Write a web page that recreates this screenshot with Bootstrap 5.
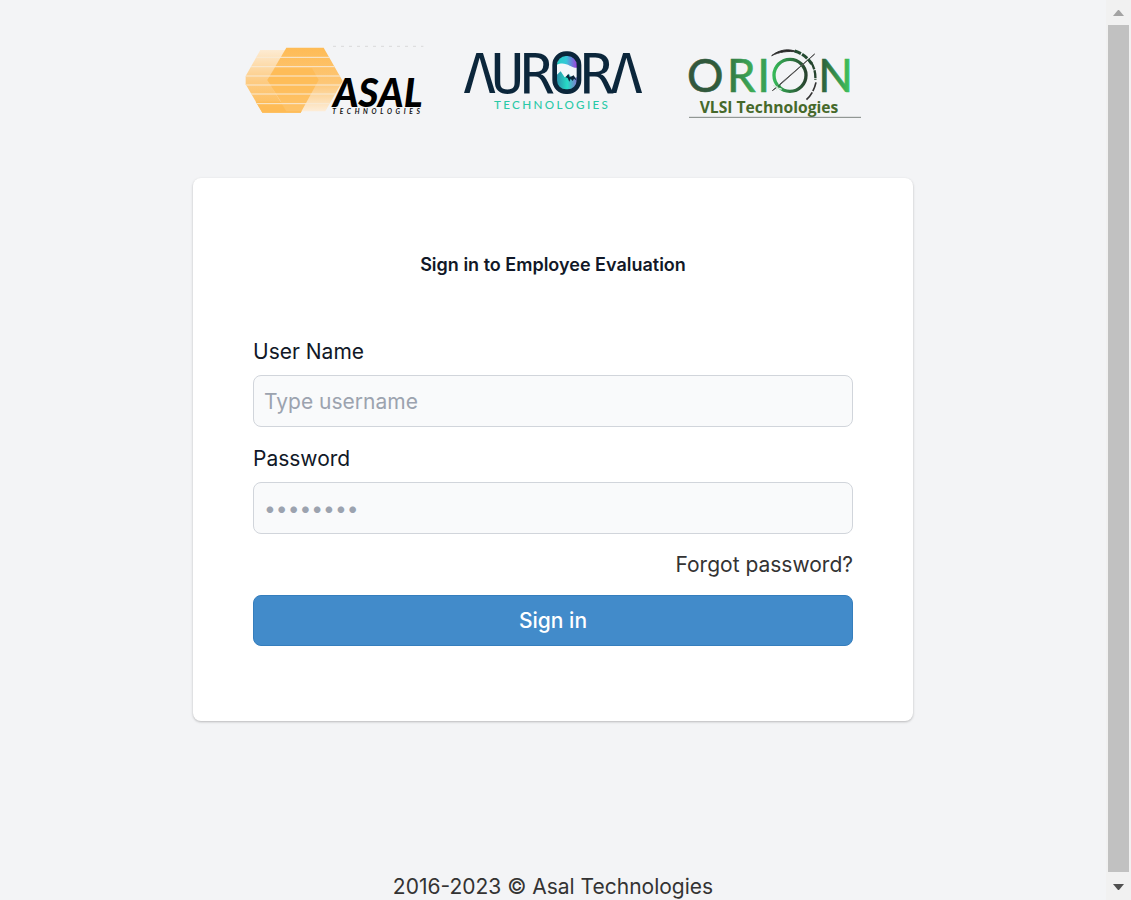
<!DOCTYPE html>
<html lang="en">
<head>
<meta charset="utf-8">
<meta name="viewport" content="width=device-width, initial-scale=1">
<title>Sign in to Employee Evaluation</title>
<link rel="stylesheet" href="https://cdn.jsdelivr.net/npm/bootstrap@5.3.0/dist/css/bootstrap.min.css">
<style>
  body { background: #f3f4f6; color: #333; font-family: Inter, "Noto Sans", sans-serif; font-size: 21px; line-height: 30px; }
  .page-main { padding-top: 36px; }
  .logo-row { gap: 8px; margin-bottom: 52px; }
  .logo-row svg { width: 200px; height: 90px; }
  .login-card { width: 100%; max-width: 720px; border: 0; border-radius: 8px; padding: 72px 60px 75px; box-shadow: 0 1px 3px rgba(0,0,0,.15), 0 1px 2px rgba(0,0,0,.1); }
  .login-title { color: #111827; font-size: 18px; font-weight: 600; line-height: 30px; margin-bottom: 57px; }
  .form-label { color: #111827; margin-bottom: 8px; }
  .form-control { height: 52px; padding: 10px; font-size: 21px; background: #f9fafb; border-color: #d1d5db; border-radius: 8px; }
  .form-control::placeholder { color: #9ca3af; }
  .field { margin-bottom: 17px; }
  .forgot { color: #333; line-height: 28px; margin-bottom: 16px; }
  .btn-signin { height: 51px; padding: 0; font-size: 21px; font-weight: 500; color: #fff; background: #428bca; border-color: #357ebd; border-radius: 8px; }
  .page-footer { line-height: 26px; }
  .scroll-track { width: 25px; background: #f1f1f1; position: sticky; top: 0; }
  .scroll-track svg { width: 25px; height: 25px; }
  .scroll-thumb { background: #c1c1c1; margin: 0 2px 3px; }
</style>
</head>
<body class="d-flex align-items-start">
<div class="d-flex flex-column flex-grow-1 min-vh-100">
  <main class="page-main d-flex flex-column align-items-center flex-grow-1">
    <div class="logo-row d-flex justify-content-center">
      <svg viewBox="27 0 600 270" role="img" aria-label="Asal Technologies">
        <defs>
          <linearGradient id="fadeTop" x2="0" y2="1"><stop stop-color="#fdebd2"/><stop offset=".5" stop-color="#fdcb82"/><stop offset="1" stop-color="#febb55"/></linearGradient>
          <linearGradient id="fadeLow" x2="0" y2="1"><stop stop-color="#febb55"/><stop offset=".55" stop-color="#fdc675"/><stop offset="1" stop-color="#fdedd8"/></linearGradient>
          <clipPath id="hexes"><path d="M73 42H188L248 132 194 230H79L29 145V120Z"/><path d="M151 35H263L320 135 268 226H151L94 132Z"/></clipPath>
        </defs>
        <path d="M73 42H188L248 132 194 230H79L29 145V120Z" fill="url(#fadeTop)"/>
        <path d="M151 35H263L320 135 268 226H151L94 132Z" fill="url(#fadeLow)"/>
        <path d="M117 97H228L248 132 194 230H79L59 197H135L94 132Z" fill="#febb55" opacity=".85"/>
        <path clip-path="url(#hexes)" d="M23 64H330M23 92H330M23 120H330M23 147H330M23 174H330M23 203H330" stroke="#f8ead5" stroke-width="3"/>
        <path d="M291 31H562" stroke="#ccc" stroke-width="2" stroke-dasharray="9 15"/>
        <text x="291" y="213" font-family="Lato" font-size="117" font-weight="900" font-style="italic" fill="#000">ASAL</text>
        <text x="289" y="233" font-family="Lato" font-size="20" font-weight="700" font-style="italic" fill="#111" letter-spacing="11">TECHNOLOGIES</text>
      </svg>
      <svg viewBox="-9 0 600 270" role="img" aria-label="Aurora Technologies">
        <defs>
          <linearGradient id="sky"><stop stop-color="#22cfc4"/><stop offset=".45" stop-color="#34c8d8"/><stop offset="1" stop-color="#a734dd"/></linearGradient>
          <linearGradient id="ice"><stop stop-color="#2b8faa"/><stop offset=".5" stop-color="#27dcc6"/><stop offset="1" stop-color="#8a70cf"/></linearGradient>
        </defs>
        <g font-family="DejaVu Sans Mono" font-size="166" fill="#0b263b">
          <text y="172" x="21 104 193">ΛUR</text><text y="172" x="373 461">RΛ</text>
        </g>
        <rect x="296" y="53" width="73" height="114" rx="34" fill="#f3f7fa"/>
        <path d="M302 86C306 64 322 57 335 57 352 57 362 68 365 95 346 98 330 73 302 86Z" fill="url(#sky)"/>
        <path d="M302 117L314 106 326 124 340 115 347 126 365 124V145C359 159 347 164 334 164 317 163 302 153 302 138Z" fill="url(#ice)"/>
        <path d="M329 124L337 113 341 124 353 118 363 134 354 128 350 135 344 128 340 137 335 126Z" fill="#0b263b"/>
        <rect x="296" y="53" width="73" height="114" rx="34" fill="none" stroke="#0b263b" stroke-width="14"/>
        <text x="114" y="218" font-family="Lato" font-size="35" font-weight="500" fill="#2ac9a7" letter-spacing="7">TECHNOLOGIES</text>
      </svg>
      <svg viewBox="-45 0 600 270" role="img" aria-label="Orion VLSI Technologies">
        <defs>
          <linearGradient id="leaf" gradientUnits="userSpaceOnUse" x1="40" x2="520" y1="0" y2="0"><stop stop-color="#33573e"/><stop offset=".17" stop-color="#2f5a3b"/><stop offset=".4" stop-color="#3dad58"/><stop offset=".82" stop-color="#2b5a3a"/><stop offset="1" stop-color="#3fc25c"/></linearGradient>
          <linearGradient id="ring"><stop stop-color="#36b858"/><stop offset="1" stop-color="#28432f"/></linearGradient>
        </defs>
        <g font-family="Lato" font-size="137" fill="url(#leaf)" stroke="url(#leaf)" stroke-width="2"><text y="167" x="33 153 244">ORI</text><text y="167" x="427">N</text></g>
        <circle cx="342" cy="118" r="48" fill="none" stroke="url(#ring)" stroke-width="10"/>
        <path d="M289 164L416 54 307 151Z" fill="#333" stroke="#555" stroke-width="3"/>
        <path d="M287 59C309 41 338 36 364 48 335 44 309 48 287 59Z" fill="#222" stroke="#333" stroke-width="3"/>
        <path d="M356 45Q389 55 407 84" fill="none" stroke="#244b31" stroke-width="9" stroke-dasharray="20 4"/>
        <path d="M405 78Q420 103 418 132" fill="none" stroke="#25432e" stroke-width="7" stroke-dasharray="24 3"/>
        <path d="M420 139Q412 174 389 193" fill="none" stroke="#333" stroke-width="5" stroke-dasharray="28 4"/>
        <path d="M291 148L317 160M309 143L301 163" stroke="#d4eed9" stroke-width="4"/>
        <circle cx="309" cy="150" r="5" fill="#277d3c"/>
        <text x="71" y="231" font-family="Open Sans" font-size="47" font-weight="700" fill="#46692b">VLSI Technologies</text>
        <path d="M39 244H555" stroke="#7d8580" stroke-width="3"/>
      </svg>
    </div>
    <form class="card login-card">
      <h1 class="login-title text-center">Sign in to Employee Evaluation</h1>
      <div class="field">
        <label class="form-label d-block" for="username">User Name</label>
        <input class="form-control" id="username" type="text" placeholder="Type username">
      </div>
      <div class="field">
        <label class="form-label d-block" for="password">Password</label>
        <input class="form-control" id="password" type="password" placeholder="••••••••">
      </div>
      <a class="forgot align-self-end text-decoration-none" href="#">Forgot password?</a>
      <button class="btn btn-signin w-100" type="submit">Sign in</button>
    </form>
  </main>
  <footer class="page-footer text-center">2016-2023 © Asal Technologies</footer>
</div>
<aside class="scroll-track d-flex flex-column flex-shrink-0 vh-100" aria-hidden="true">
  <svg viewBox="0 0 25 25"><path d="M7 16L12 10H13L18 16Z" fill="#a3a3a3"/></svg>
  <div class="scroll-thumb flex-grow-1"></div>
  <svg viewBox="0 0 25 25"><path d="M7 9L12 15H13L18 9Z" fill="#505050"/></svg>
</aside>
<script src="https://cdn.jsdelivr.net/npm/bootstrap@5.3.0/dist/js/bootstrap.bundle.min.js"></script>
</body>
</html>
